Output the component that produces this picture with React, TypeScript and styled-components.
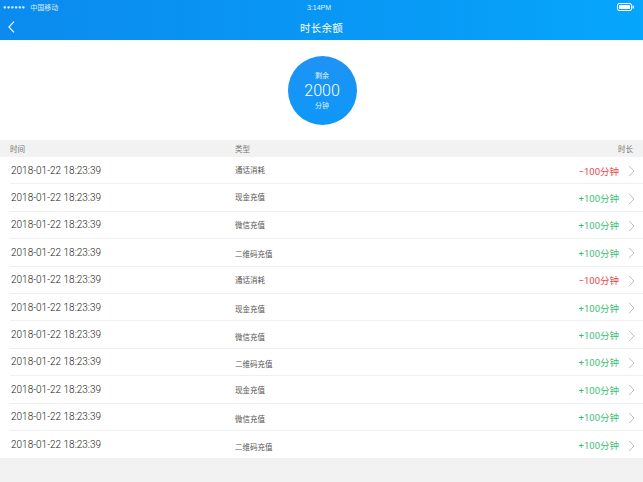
import React from "react";
import styled, { createGlobalStyle } from "styled-components";

const GlobalStyle = createGlobalStyle`
  html, body {
    margin: 0;
    padding: 0;
    background: #f2f2f2;
    font-family: "Liberation Sans", "Noto Sans CJK SC", sans-serif;
  }
`;

declare interface Record {
  time: string;
  type: string;
  amount: number;
  shift: number;
}

const records: Record[] = [
  { time: "2018-01-22 18:23:39", type: "通话消耗", amount: -100, shift: -1 },
  { time: "2018-01-22 18:23:39", type: "现金充值", amount: 100, shift: -1 },
  { time: "2018-01-22 18:23:39", type: "微信充值", amount: 100, shift: 0 },
  { time: "2018-01-22 18:23:39", type: "二维码充值", amount: 100, shift: 1 },
  { time: "2018-01-22 18:23:39", type: "通话消耗", amount: -100, shift: 0 },
  { time: "2018-01-22 18:23:39", type: "现金充值", amount: 100, shift: 1 },
  { time: "2018-01-22 18:23:39", type: "微信充值", amount: 100, shift: 2 },
  { time: "2018-01-22 18:23:39", type: "二维码充值", amount: 100, shift: 2 },
  { time: "2018-01-22 18:23:39", type: "现金充值", amount: 100, shift: 0 },
  { time: "2018-01-22 18:23:39", type: "微信充值", amount: 100, shift: 2 },
  { time: "2018-01-22 18:23:39", type: "二维码充值", amount: 100, shift: 2 },
];

const Chevron = ({ color = "#b8b8b8" }: { color?: string }) => (
  <svg width="7" height="12" viewBox="0 0 7 12" fill="none">
    <path d="M1 0.8 L6 6 L1 11.2" stroke={color} strokeWidth="0.9" />
  </svg>
);

const BackArrow = () => (
  <svg width="7" height="12" viewBox="0 0 7 12" fill="none">
    <path d="M6 0.6 L0.9 6 L6 11.4" stroke="#ffffff" strokeWidth="1.1" />
  </svg>
);

const Battery = () => (
  <svg width="18" height="8" viewBox="0 0 18 8" fill="none">
    <rect x="0.5" y="0.5" width="14" height="7" rx="1.5" stroke="#ffffff" strokeWidth="1" />
    <rect x="2" y="2" width="11" height="4" rx="0.5" fill="#ffffff" />
    <rect x="15.5" y="2.5" width="1.5" height="3" rx="0.6" fill="#ffffff" />
  </svg>
);

const App = () => {
  return (
    <Page>
      <GlobalStyle />
      <TopBar>
        <StatusBar>
          <Carrier>
            <Dots>●●●●●●</Dots>
            <span>中国移动</span>
          </Carrier>
          <Clock>3:14PM</Clock>
          <BatteryBox>
            <Battery />
          </BatteryBox>
        </StatusBar>
        <NavBar>
          <BackButton>
            <BackArrow />
          </BackButton>
          <Title>时长余额</Title>
        </NavBar>
      </TopBar>
      <Summary>
        <Balance>
          <BalanceLabel>剩余</BalanceLabel>
          <BalanceValue>2000</BalanceValue>
          <BalanceLabel>分钟</BalanceLabel>
        </Balance>
      </Summary>
      <TableHead>
        <HeadCell>时间</HeadCell>
        <HeadCell>类型</HeadCell>
        <HeadCell align="right">时长</HeadCell>
      </TableHead>
      <List>
        {records.map((r, i) => (
          <Row key={i}>
            <TimeCell>{r.time}</TimeCell>
            <TypeCell shift={r.shift}>{r.type}</TypeCell>
            <AmountCell positive={r.amount > 0}>
              {r.amount > 0 ? `+${r.amount}` : `−${Math.abs(r.amount)}`}分钟
            </AmountCell>
            <ArrowCell>
              <Chevron />
            </ArrowCell>
          </Row>
        ))}
      </List>
    </Page>
  );
};

const Page = styled.div`
  width: 643px;
  height: 482px;
  background: #f2f2f2;
  overflow: hidden;
`;

const TopBar = styled.header`
  height: 40px;
  background: linear-gradient(90deg, #0b8bef 0%, #0899f5 60%, #06a6fc 100%);
  color: #ffffff;
`;

const StatusBar = styled.div`
  height: 14px;
  display: grid;
  grid-template-columns: 1fr auto 1fr;
  align-items: center;
  padding: 0 8px 0 3px;
  font-size: 7px;
`;

const Carrier = styled.div`
  display: flex;
  align-items: center;
  gap: 5px;
  color: rgba(255, 255, 255, 0.85);
`;

const Dots = styled.span`
  font-size: 5.5px;
  letter-spacing: 0.4px;
`;

const Clock = styled.div`
  font-size: 7px;
  color: rgba(255, 255, 255, 0.9);
`;

const BatteryBox = styled.div`
  display: flex;
  justify-content: flex-end;
`;

const NavBar = styled.div`
  height: 26px;
  display: flex;
  align-items: center;
  justify-content: center;
  position: relative;
`;

const BackButton = styled.div`
  position: absolute;
  left: 8px;
  top: 7px;
  display: flex;
`;

const Title = styled.h1`
  margin: 0;
  font-size: 10.5px;
  font-weight: 400;
  letter-spacing: 0.3px;
`;

const Summary = styled.section`
  height: 100px;
  background: #ffffff;
  display: flex;
  align-items: center;
  justify-content: center;
`;

const Balance = styled.div`
  width: 69px;
  height: 69px;
  border-radius: 50%;
  background: linear-gradient(180deg, #1e93f5 0%, #0d98f8 100%);
  color: #ffffff;
  display: flex;
  flex-direction: column;
  align-items: center;
  justify-content: center;
  margin-left: 1px;
`;

const BalanceLabel = styled.span`
  font-size: 7px;
  line-height: 9px;
  opacity: 0.9;
`;

const BalanceValue = styled.span`
  font-family: Roboto, "Liberation Sans", sans-serif;
  font-size: 16px;
  line-height: 21px;
  font-weight: 300;
`;

const TableHead = styled.div`
  height: 17px;
  display: grid;
  grid-template-columns: 225px 1fr 60px;
  align-items: center;
  padding: 0 10px;
  background: #f2f2f2;
`;

const HeadCell = styled.span<{ align?: "right" }>`
  font-size: 7.5px;
  color: #777777;
  text-align: ${({ align }) => align || "left"};
`;

const List = styled.ul`
  margin: 0;
  padding: 0;
  list-style: none;
  background: #ffffff;
`;

const Row = styled.li`
  height: 27.4px;
  box-sizing: border-box;
  display: grid;
  grid-template-columns: 225px 1fr auto 16px;
  align-items: center;
  margin-left: 10px;
  padding-right: 8px;
  border-bottom: 0.5px solid #efefef;
  &:last-child {
    border-bottom: none;
  }
`;

const TimeCell = styled.span`
  font-family: Roboto, "Liberation Sans", sans-serif;
  font-size: 10px;
  font-weight: 300;
  color: #222222;
  padding-left: 1px;
`;

const TypeCell = styled.span<{ shift: number }>`
  font-size: 7.5px;
  color: #555555;
  transform: translateY(${({ shift }) => shift}px);
`;

const AmountCell = styled.span<{ positive: boolean }>`
  font-family: Roboto, "Liberation Sans", "Noto Sans CJK SC", sans-serif;
  font-size: 9.5px;
  color: ${({ positive }) => (positive ? "#3ebd78" : "#e8454f")};
  margin-top: 1px;
`;

const ArrowCell = styled.span`
  display: flex;
  justify-content: flex-end;
  margin-top: 2px;
`;

export default App;
